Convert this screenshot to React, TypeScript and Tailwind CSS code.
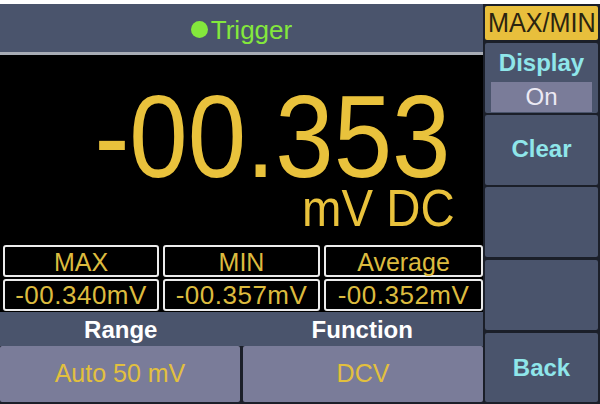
const slate = 'bg-[#4a546c]'
const lilac = 'bg-[#7a7c99]'
const statBox = 'border-2 border-[#ececec] rounded-[3px] bg-black flex items-center justify-center text-[#dcbb3f] leading-none'

const stats = [
  { label: 'MAX', value: '-00.340mV' },
  { label: 'MIN', value: '-00.357mV' },
  { label: 'Average', value: '-00.352mV' },
]

function SideButton({ children, className = '' }: { children?: React.ReactNode; className?: string }) {
  return (
    <div className={`${slate} rounded-[2px] flex items-center justify-center text-[24px] font-bold text-[#8fe6ea] ${className}`}>
      {children}
    </div>
  )
}

export default function App() {
  return (
    <div className="w-[600px] h-[404px] bg-[#1b1f29] flex flex-col overflow-hidden font-['Liberation_Sans',Arial,sans-serif]">
      <div className="h-[4px] bg-white shrink-0" />
      <div className="flex flex-1 min-h-0">
        {/* Left: readout */}
        <div className="w-[483px] flex flex-col">
          <div className={`h-[51px] ${slate} border-b-[3px] border-[#a8acb5] flex items-center justify-center gap-[3px] pt-[3px]`}>
            <span className="w-[17px] h-[17px] rounded-full bg-[#84e83c]" />
            <span className="text-[26px] leading-none text-[#84e83c]">Trigger</span>
          </div>

          <div className="h-[190px] bg-black flex flex-col items-end">
            <div className="mt-[33px] mr-[33px] text-[116px] leading-[99px] text-[#e9c23c] scale-x-[0.905] origin-right whitespace-nowrap">
              -00.353
            </div>
            <div className="mt-[1px] mr-[28px] text-[52px] leading-[40px] text-[#e9c23c] scale-x-[0.91] origin-right whitespace-nowrap">
              mV DC
            </div>
          </div>

          <div className="h-[67px] bg-black grid grid-cols-[156px_157px_159px] grid-rows-[32px_32px] gap-x-[4px] gap-y-[2px] pl-[3px]">
            {stats.map(s => (
              <div key={s.label} className={`${statBox} text-[25px] pt-[3px]`}>{s.label}</div>
            ))}
            {stats.map(s => (
              <div key={s.value} className={`${statBox} text-[26px] tracking-[0.5px]`}>{s.value}</div>
            ))}
          </div>

          <div className={`h-[34px] ${slate} grid grid-cols-2 text-[24px] font-bold text-white leading-none`}>
            <div className="flex items-center justify-center pt-[2px]">Range</div>
            <div className="flex items-center justify-center pt-[2px]">Function</div>
          </div>

          <div className="h-[56px] flex gap-[3px]">
            <div className={`w-[240px] ${lilac} rounded-[2px] flex items-center justify-center text-[25px] text-[#e2c03e]`}>Auto 50 mV</div>
            <div className={`flex-1 ${lilac} rounded-[2px] flex items-center justify-center text-[25px] text-[#e2c03e]`}>DCV</div>
          </div>
        </div>

        {/* Right: soft keys */}
        <div className="w-[113px] ml-[2px] flex flex-col pt-[2px]">
          <div className="h-[34px] bg-[#e8bf3c] rounded-[2px] flex items-center justify-center">
            <span className="text-[28px] leading-none text-[#2b2410] scale-x-[0.9] whitespace-nowrap">MAX/MIN</span>
          </div>
          <div className={`h-[70px] mt-[3px] ${slate} rounded-[2px] flex flex-col items-center`}>
            <span className="mt-[8px] text-[24px] leading-none font-bold text-[#8fe6ea]">Display</span>
            <div className={`mt-[7px] w-[101px] h-[30px] ${lilac} flex items-center justify-center text-[24px] leading-none text-[#eceaf4]`}>On</div>
          </div>
          <SideButton className="h-[70px] mt-[2px] pb-[3px]">Clear</SideButton>
          <SideButton className="h-[70px] mt-[2px]" />
          <SideButton className="h-[70px] mt-[3px]" />
          <SideButton className="h-[69px] mt-[3px]">Back</SideButton>
        </div>
      </div>
    </div>
  )
}
